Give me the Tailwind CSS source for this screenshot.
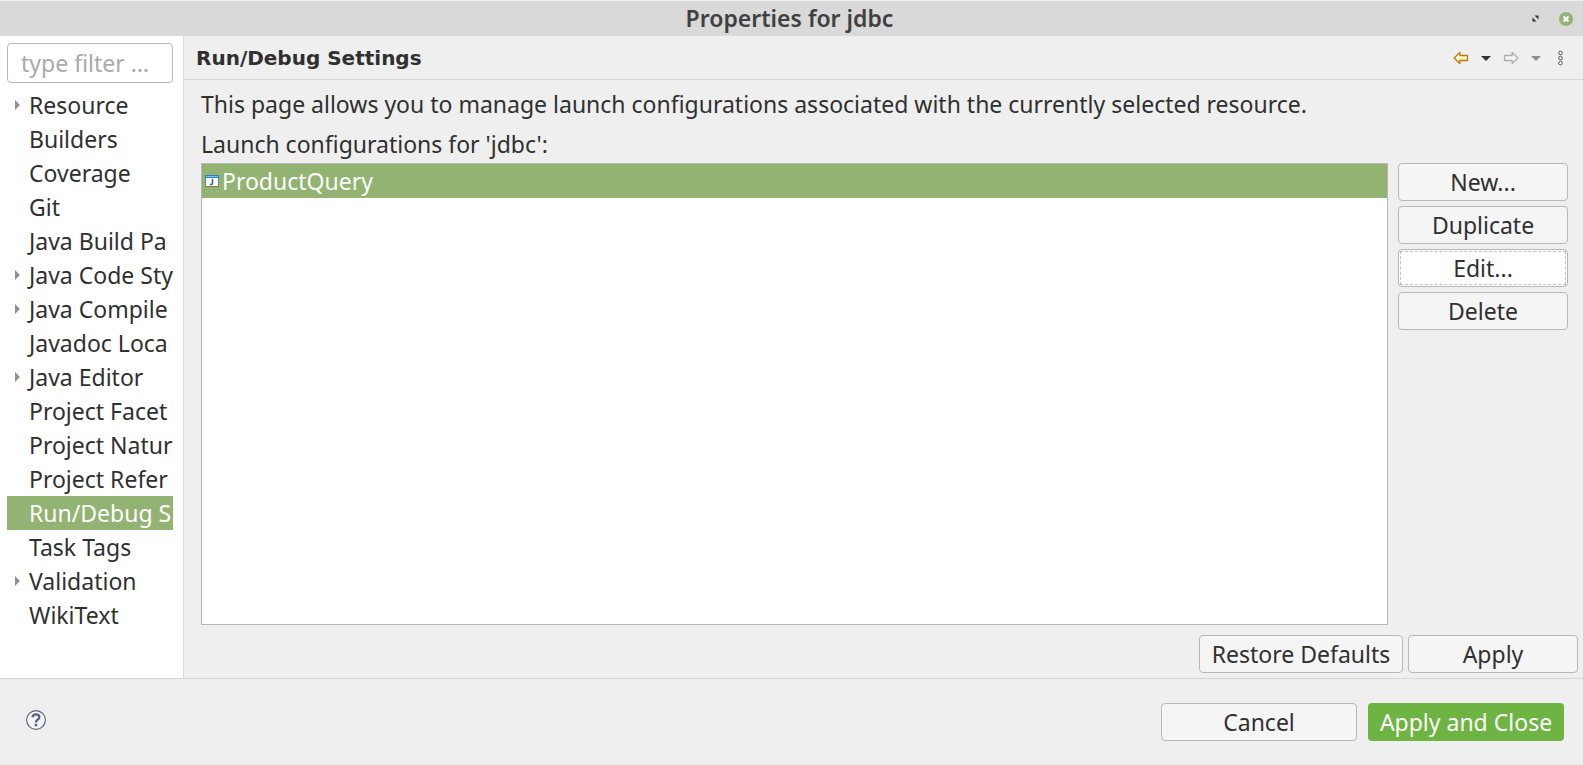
<!DOCTYPE html>
<html lang="en">
<head>
<meta charset="utf-8">
<title>Properties for jdbc</title>
<script src="https://cdn.jsdelivr.net/npm/@tailwindcss/browser@4"></script>
</head>
<body class="flex h-screen flex-col bg-[#efefef] font-['Noto_Sans',sans-serif] text-[23px] leading-[34px] text-[#303030]">
<header class="relative flex h-9 shrink-0 items-center justify-center border-t border-[#efefef] bg-[#d9d9d9]">
  <h1 class="pr-1 pb-px text-[23px] font-semibold text-[#404040]">Properties for jdbc</h1>
  <div class="absolute inset-y-0 right-2 flex items-center gap-[18px]">
    <button aria-label="Maximize" class="block"><svg class="block" width="7" height="7" viewBox="0 0 7 7" fill="#303030"><path d="M2.5 .5h4v4zM.5 2.5v4h4z"/></svg></button>
    <button aria-label="Close" class="block"><svg class="block" width="18" height="18" viewBox="0 0 18 18"><circle cx="9" cy="9" r="7" fill="#92b372"/><path d="M6.5 6.5l5 5m0-5l-5 5" stroke="#fff" stroke-width="2"/></svg></button>
  </div>
</header>
<div class="flex min-h-0 flex-1">
  <aside class="w-46 shrink-0 overflow-hidden border-r border-[#dcdcdc] bg-white pt-[7px] pr-2.5 pl-[7px]">
    <input type="text" aria-label="Filter" placeholder="type filter …" class="block h-10 w-full rounded border border-[#b8b8b8] bg-white px-[13px] placeholder:text-[#aaaaaa] focus:outline-none">
    <ul class="mt-[5px] whitespace-nowrap" role="tree">
      <li class="flex items-center overflow-hidden" role="treeitem"><span class="flex w-[22px] shrink-0 pl-2"><svg width="5" height="10" viewBox="0 0 5 10"><path d="M0 0l5 5-5 5z" fill="#909090"/></svg></span>Resource</li>
      <li class="overflow-hidden pl-[22px]" role="treeitem">Builders</li>
      <li class="overflow-hidden pl-[22px]" role="treeitem">Coverage</li>
      <li class="overflow-hidden pl-[22px]" role="treeitem">Git</li>
      <li class="overflow-hidden pl-[22px]" role="treeitem">Java Build Pa</li>
      <li class="flex items-center overflow-hidden" role="treeitem"><span class="flex w-[22px] shrink-0 pl-2"><svg width="5" height="10" viewBox="0 0 5 10"><path d="M0 0l5 5-5 5z" fill="#909090"/></svg></span>Java Code Sty</li>
      <li class="flex items-center overflow-hidden" role="treeitem"><span class="flex w-[22px] shrink-0 pl-2"><svg width="5" height="10" viewBox="0 0 5 10"><path d="M0 0l5 5-5 5z" fill="#909090"/></svg></span>Java Compile</li>
      <li class="overflow-hidden pl-[22px]" role="treeitem">Javadoc Loca</li>
      <li class="flex items-center overflow-hidden" role="treeitem"><span class="flex w-[22px] shrink-0 pl-2"><svg width="5" height="10" viewBox="0 0 5 10"><path d="M0 0l5 5-5 5z" fill="#909090"/></svg></span>Java Editor</li>
      <li class="overflow-hidden pl-[22px]" role="treeitem">Project Facet</li>
      <li class="overflow-hidden pl-[22px]" role="treeitem">Project Natur</li>
      <li class="overflow-hidden pl-[22px]" role="treeitem">Project Refer</li>
      <li class="overflow-hidden bg-[#92b372] pl-[22px] text-white" role="treeitem" aria-selected="true">Run/Debug S</li>
      <li class="overflow-hidden pl-[22px]" role="treeitem">Task Tags</li>
      <li class="flex items-center overflow-hidden" role="treeitem"><span class="flex w-[22px] shrink-0 pl-2"><svg width="5" height="10" viewBox="0 0 5 10"><path d="M0 0l5 5-5 5z" fill="#909090"/></svg></span>Validation</li>
      <li class="overflow-hidden pl-[22px]" role="treeitem">WikiText</li>
    </ul>
  </aside>
  <main class="flex min-w-0 flex-1 flex-col">
    <div class="flex h-11 shrink-0 items-center justify-between border-b border-[#d5d5d5] pt-px pr-[15px] pl-3">
      <h2 class="font-['DejaVu_Sans',sans-serif] text-[20px] font-bold">Run/Debug Settings</h2>
      <div class="flex items-center gap-3">
        <button aria-label="Back"><svg class="block" width="16" height="14" viewBox="0 0 16 14"><defs><linearGradient id="g" x1="0" y1="0" x2="0" y2="1"><stop offset="0" stop-color="#fff"/><stop offset="1" stop-color="#fdeaa0"/></linearGradient></defs><path d="M1.2 7L6.8 1.4V4.5H14.5V9.5H6.8V12.6z" fill="url(#g)" stroke="#b5790f" stroke-width="1.3" stroke-linejoin="round"/></svg></button>
        <button aria-label="Back history"><svg class="block" width="10" height="5" viewBox="0 0 10 5"><path d="M0 0h10L5 5z" fill="#303030"/></svg></button>
        <button aria-label="Forward" disabled><svg class="block" width="16" height="14" viewBox="0 0 16 14"><path d="M14.8 7L9.2 1.4V4.5H1.5V9.5H9.2V12.6z" fill="#f6f6f6" stroke="#acacac" stroke-width="1.3" stroke-linejoin="round"/></svg></button>
        <button aria-label="Forward history" disabled><svg class="block" width="10" height="5" viewBox="0 0 10 5"><path d="M0 0h10L5 5z" fill="#8c8c8c"/></svg></button>
        <button aria-label="View menu" class="px-1"><svg class="block" width="7" height="16" viewBox="0 0 7 16" fill="#fff" stroke="#555" stroke-width="1"><circle cx="3.5" cy="3" r="1.8"/><circle cx="3.5" cy="8" r="1.8"/><circle cx="3.5" cy="13" r="1.8"/></svg></button>
      </div>
    </div>
    <div class="flex min-h-0 flex-1 flex-col pt-[7px] pr-[5px] pb-[5px] pl-[17px]">
      <p>This page allows you to manage launch configurations associated with the currently selected resource.</p>
      <p class="mt-1.5 mb-0.5" id="cfg">Launch configurations for 'jdbc':</p>
      <div class="flex min-h-0 flex-1 gap-2.5 pr-2.5">
        <ul class="min-w-0 flex-1 border border-[#b8b8b8] bg-white" role="listbox" aria-labelledby="cfg">
          <li class="flex items-center gap-[3px] bg-[#92b372] pl-[3px] text-white" role="option" aria-selected="true"><svg width="14" height="12" viewBox="0 0 14 12"><path d="M.5.5h13v11H.5z" fill="#fff" stroke="#8a7a48"/><path d="M0 0h14v3H0z" fill="#2f7fc4"/><path d="M1 1h12v1H1z" fill="#7fc0ee"/><path d="M0 3h1v6H0zM13 3h1v6h-1z" fill="#4f88b0"/><path d="M7.5 4v4q0 1.5-1.5 1.5H5" fill="none" stroke="#2a5c96" stroke-width="1.5"/></svg>ProductQuery</li>
        </ul>
        <div class="flex w-[170px] flex-col gap-[5px]">
          <button class="h-[38px] rounded border border-[#b8b8b8] bg-[#f5f5f5]">New...</button>
          <button class="h-[38px] rounded border border-[#b8b8b8] bg-[#f5f5f5]">Duplicate</button>
          <button class="flex h-[38px] rounded border border-[#b8b8b8] bg-white p-px"><span class="flex flex-1 items-center justify-center self-stretch border border-dashed border-[#c0c0c0]">Edit...</span></button>
          <button class="h-[38px] rounded border border-[#b8b8b8] bg-[#f5f5f5]">Delete</button>
        </div>
      </div>
      <div class="mt-2.5 flex justify-end gap-[5px]">
        <button class="h-[38px] w-51 rounded border border-[#b8b8b8] bg-[#f5f5f5] whitespace-nowrap">Restore Defaults</button>
        <button class="h-[38px] w-[170px] rounded border border-[#b8b8b8] bg-[#f5f5f5]">Apply</button>
      </div>
    </div>
  </main>
</div>
<footer class="flex h-[87px] shrink-0 items-start justify-between border-t border-[#d5d5d5] pt-6 pr-[19px] pl-[25px]">
  <button aria-label="Help" class="mt-1.5"><svg class="block" width="22" height="22" viewBox="0 0 22 22" fill="none"><circle cx="11" cy="11" r="9.4" fill="#f4f4f4" stroke="#5b6780" stroke-width="1.2"/><path d="M7.6 8.4Q7.8 5.4 11 5.4Q14.3 5.4 14.3 8.2Q14.3 9.8 12.6 10.8Q11 11.8 11 13.4" stroke="#56648a" stroke-width="2.4"/><path d="M9.7 14.8h2.6v2.4H9.7z" fill="#56648a"/></svg></button>
  <div class="flex gap-[11px]">
    <button class="h-[38px] w-49 rounded border border-[#b8b8b8] bg-[#f5f5f5]">Cancel</button>
    <button class="h-[38px] w-49 rounded bg-[#6db442] whitespace-nowrap text-white">Apply and Close</button>
  </div>
</footer>
</body>
</html>
